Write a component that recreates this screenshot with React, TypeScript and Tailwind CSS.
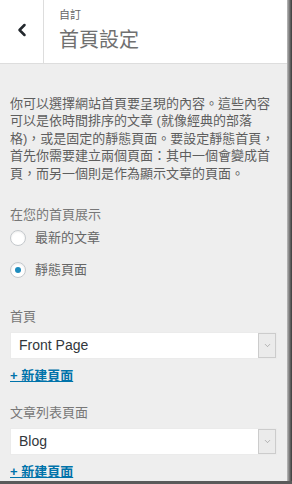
import { ChevronLeft, ChevronDown } from 'lucide-react'

const font = 'font-["Liberation_Sans","Noto_Sans_CJK_TC",sans-serif]'

function Radio({ label, checked }: { label: string; checked?: boolean }) {
  return (
    <label className="flex items-center gap-[9px] h-[32px]">
      <span className="grid h-[16px] w-[16px] place-items-center rounded-full border border-[#c4c8cc] bg-white shadow-[inset_0_1px_2px_rgba(0,0,0,0.08)]">
        {checked && <span className="h-[6px] w-[6px] rounded-full bg-[#1e8cbe]" />}
      </span>
      <span className="text-[13px] text-[#666666]">{label}</span>
    </label>
  )
}

function Select({ value }: { value: string }) {
  return (
    <div className="flex h-[27px] items-stretch bg-white border border-[#ebebeb]">
      <div className="flex flex-1 items-center px-[8px] text-[14px] text-[#32373c]">{value}</div>
      <div className="grid w-[18px] place-items-center border border-[#cccccc] bg-[#ebebeb]">
        <ChevronDown size={9} strokeWidth={1.5} className="text-[#888]" />
      </div>
    </div>
  )
}

function AddLink() {
  return (
    <a className="mt-[7px] block text-[13px] font-semibold text-[#0073aa] underline">+ 新建頁面</a>
  )
}

export default function App() {
  return (
    <div className={`${font} flex h-[484px] w-[292px] flex-col bg-[#4a4a4a]`}>
      <div className="flex h-[481px]">
        <div className="flex w-[287px] flex-col bg-[#eeeeee]">
          {/* HEADER */}
          <div className="flex h-[64px] border-b border-[#dddddd] bg-white">
            <div className="grid w-[44px] place-items-center border-r border-[#dddddd]">
              <ChevronLeft size={20} strokeWidth={3} className="text-[#23282d] -mt-[2px]" />
            </div>
            <div className="flex flex-col pl-[15px] pt-[8px]">
              <span className="text-[11px] text-[#666666] leading-[14px]">自訂</span>
              <span className="mt-[5px] text-[20px] text-[#707070] leading-[26px]">首頁設定</span>
            </div>
          </div>

          {/* BODY */}
          <div className="flex flex-col px-[10px] pt-[31px]">
            <p className="text-[13px] leading-[17.5px] text-[#5e5e5e]">
              你可以選擇網站首頁要呈現的內容。這些內容可以是依時間排序的文章 (就像經典的部落格)，或是固定的靜態頁面。要設定靜態首頁，首先你需要建立兩個頁面：其中一個會變成首頁，而另一個則是作為顯示文章的頁面。
            </p>

            <div className="mt-[24px] text-[13px] text-[#777777] leading-[18px]">在您的首頁展示</div>
            <div className="-mt-[2px] flex flex-col">
              <Radio label="最新的文章" />
              <Radio label="靜態頁面" checked />
            </div>

            <div className="mt-[22px] text-[13px] text-[#777777] leading-[18px]">首頁</div>
            <div className="mt-[6px]">
              <Select value="Front Page" />
            </div>
            <AddLink />

            <div className="mt-[18px] text-[13px] text-[#777777] leading-[18px]">文章列表頁面</div>
            <div className="mt-[6px]">
              <Select value="Blog" />
            </div>
            <AddLink />
          </div>
        </div>
        <div className="flex-1 bg-gradient-to-r from-[#bdbdbd] via-[#777] to-[#3a3a3a]" />
      </div>
      <div className="h-[3px] bg-[#5a5a5a]" />
    </div>
  )
}
